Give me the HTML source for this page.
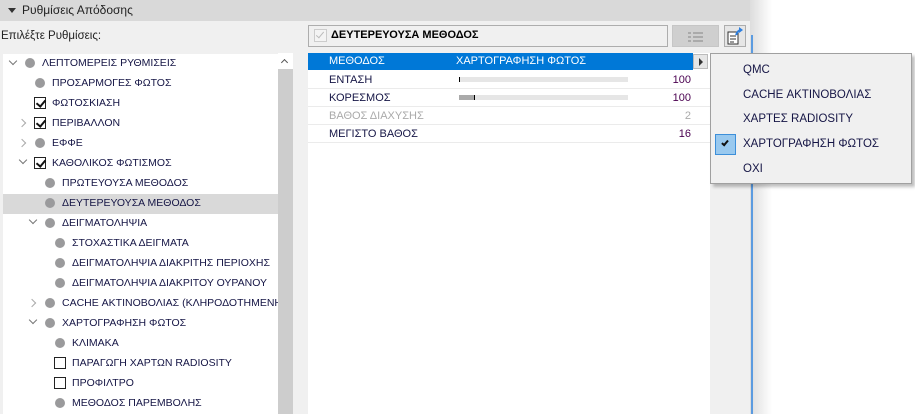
<!DOCTYPE html><html><head><meta charset="utf-8"><style>
*{margin:0;padding:0;box-sizing:border-box}
body{width:915px;height:414px;overflow:hidden;background:#fff;font-family:"Liberation Sans","DejaVu Sans",sans-serif;font-size:10.5px;color:#151545;position:relative}
.a{position:absolute}
.main{left:0;top:0;width:750px;height:414px;background:#f0f0f0}
.hdr{left:0;top:0;width:750px;height:21px;background:#d9d9d9;color:#222;font-size:12px}
.tree{left:3px;top:54px;width:275px;height:360px;background:#fff}
.sb{left:278px;top:53px;width:15px;height:361px;background:#cdcdcd}
.row{position:absolute;height:20px;line-height:20px;white-space:nowrap}
.dot{position:absolute;width:10px;height:10px;border-radius:50%;background:#9a9a9c}
.cb{position:absolute;width:12px;height:12px;border:1px solid #222;background:#fff}
.cb.k:after{content:"";position:absolute;left:3px;top:0px;width:4px;height:7px;border:solid #111;border-width:0 2px 2px 0;transform:rotate(40deg)}
.chd,.chr{position:absolute;width:6px;height:6px;border:solid #777;border-width:0 1.5px 1.5px 0}
.chd{transform:rotate(45deg)}
.chr{transform:rotate(-45deg);border-color:#aaa}
.rp{left:308px;top:53px;width:402px;height:361px;background:#fff}
.tr{position:absolute;left:308px;width:402px;height:18px;line-height:18px;border-bottom:1px solid #ebebeb;font-size:11px}
.pop{left:710px;top:53px;width:202px;height:131px;background:#f0f0f0;border:1px solid #a0a0a0;box-shadow:3px 3px 3px rgba(0,0,0,.25);font-size:11.5px}
.pi{position:absolute;left:32px}
</style></head><body>
<div class="a main"></div>
<div class="a" style="left:750px;top:0;width:22px;height:414px;background:linear-gradient(90deg,#ddd,#fff)"></div>
<div class="a" style="left:751px;top:35px;width:2px;height:379px;background:#5b9be0"></div>
<div class="a hdr"><span class="a" style="left:8px;top:8px;width:0;height:0;border-left:4px solid transparent;border-right:4px solid transparent;border-top:5px solid #333"></span><span class="a" style="left:22px;top:3px">Ρυθμίσεις Απόδοσης</span></div>
<div class="a" style="left:1px;top:30px;color:#222;font-size:11.5px">Επιλέξτε Ρυθμίσεις:</div>
<div class="a tree">
<div class="chd" style="left:7px;top:4px"></div><div class="dot" style="left:22px;top:4px"></div><div class="row" style="left:39px;top:-1px">ΛΕΠΤΟΜΕΡΕΙΣ ΡΥΘΜΙΣΕΙΣ</div>
<div class="dot" style="left:32px;top:24px"></div><div class="row" style="left:49px;top:19px">ΠΡΟΣΑΡΜΟΓΕΣ ΦΩΤΟΣ</div>
<div class="cb k" style="left:31px;top:43px"></div><div class="row" style="left:49px;top:39px">ΦΩΤΟΣΚΙΑΣΗ</div>
<div class="chr" style="left:16px;top:66px"></div><div class="cb k" style="left:31px;top:63px"></div><div class="row" style="left:49px;top:59px">ΠΕΡΙΒΑΛΛΟΝ</div>
<div class="chr" style="left:16px;top:86px"></div><div class="dot" style="left:32px;top:84px"></div><div class="row" style="left:49px;top:79px">ΕΦΦΕ</div>
<div class="chd" style="left:17px;top:103px"></div><div class="cb k" style="left:31px;top:103px"></div><div class="row" style="left:49px;top:99px">ΚΑΘΟΛΙΚΟΣ ΦΩΤΙΣΜΟΣ</div>
<div class="dot" style="left:42px;top:124px"></div><div class="row" style="left:59px;top:119px">ΠΡΩΤΕΥΟΥΣΑ ΜΕΘΟΔΟΣ</div>
<div class="a" style="left:0;top:140px;width:275px;height:20px;background:#d9d9d9"></div>
<div class="dot" style="left:42px;top:144px"></div><div class="row" style="left:59px;top:139px">ΔΕΥΤΕΡΕΥΟΥΣΑ ΜΕΘΟΔΟΣ</div>
<div class="chd" style="left:27px;top:163px"></div><div class="dot" style="left:42px;top:164px"></div><div class="row" style="left:59px;top:159px">ΔΕΙΓΜΑΤΟΛΗΨΙΑ</div>
<div class="dot" style="left:52px;top:184px"></div><div class="row" style="left:69px;top:179px">ΣΤΟΧΑΣΤΙΚΑ ΔΕΙΓΜΑΤΑ</div>
<div class="dot" style="left:52px;top:204px"></div><div class="row" style="left:69px;top:199px">ΔΕΙΓΜΑΤΟΛΗΨΙΑ ΔΙΑΚΡΙΤΗΣ ΠΕΡΙΟΧΗΣ</div>
<div class="dot" style="left:52px;top:224px"></div><div class="row" style="left:69px;top:219px">ΔΕΙΓΜΑΤΟΛΗΨΙΑ ΔΙΑΚΡΙΤΟΥ ΟΥΡΑΝΟΥ</div>
<div class="chr" style="left:26px;top:246px"></div><div class="dot" style="left:42px;top:244px"></div><div class="row" style="left:59px;top:239px;width:216px;overflow:hidden">CACHE ΑΚΤΙΝΟΒΟΛΙΑΣ (ΚΛΗΡΟΔΟΤΗΜΕΝΗ</div>
<div class="chd" style="left:27px;top:263px"></div><div class="dot" style="left:42px;top:264px"></div><div class="row" style="left:59px;top:259px">ΧΑΡΤΟΓΡΑΦΗΣΗ ΦΩΤΟΣ</div>
<div class="dot" style="left:52px;top:284px"></div><div class="row" style="left:69px;top:279px">ΚΛΙΜΑΚΑ</div>
<div class="cb" style="left:51px;top:303px"></div><div class="row" style="left:69px;top:299px">ΠΑΡΑΓΩΓΗ ΧΑΡΤΩΝ RADIOSITY</div>
<div class="cb" style="left:51px;top:323px"></div><div class="row" style="left:69px;top:319px">ΠΡΟΦΙΛΤΡΟ</div>
<div class="dot" style="left:52px;top:344px"></div><div class="row" style="left:69px;top:339px">ΜΕΘΟΔΟΣ ΠΑΡΕΜΒΟΛΗΣ</div>
</div>
<div class="a sb"><div class="a" style="left:0;top:0;width:15px;height:16px;background:#fff"></div><div class="a" style="left:4px;top:7px;width:5px;height:5px;border:solid #555;border-width:1.5px 0 0 1.5px;transform:rotate(45deg)"></div></div>
<div class="a" style="left:308px;top:25px;width:360px;height:22px;border:1px solid #adadad;background:#f0f0f0"></div>
<div class="a" style="left:314px;top:29px;width:13px;height:13px;border:1px solid #ccc;background:#f4f4f4"><div class="a" style="left:3px;top:0;width:4px;height:8px;border:solid #bbb;border-width:0 1.5px 1.5px 0;transform:rotate(40deg)"></div></div>
<div class="a" style="left:331px;top:29px;font-weight:bold;color:#000;font-size:11px">ΔΕΥΤΕΡΕΥΟΥΣΑ ΜΕΘΟΔΟΣ</div>
<div class="a" style="left:672px;top:25px;width:47px;height:22px;background:#cfcfcf;border:1px solid #c6c6c6"><svg width="47" height="22"><g fill="#aaa"><rect x="15" y="6" width="3" height="2"/><rect x="20" y="6" width="10" height="2"/><rect x="15" y="10" width="3" height="2"/><rect x="20" y="10" width="10" height="2"/><rect x="15" y="14" width="3" height="2"/><rect x="20" y="14" width="10" height="2"/></g></svg></div>
<div class="a" style="left:724px;top:25px;width:22px;height:22px;border:1px solid #adadad;background:#e6e6e6"><svg width="20" height="20"><rect x="3" y="6" width="10" height="12" fill="#fff" stroke="#333"/><path d="M5 10h6M5 13h6M5 16h4" stroke="#333"/><path d="M11 9 Q13 4 16 4" stroke="#2d7fe0" stroke-width="2" fill="none"/><path d="M14 1l4 3-4 3z" fill="#2d7fe0"/></svg></div>
<div class="a rp"></div>
<div class="a" style="left:308px;top:53px;width:385px;height:17px;background:#0078d7;color:#fff;line-height:17px;font-size:11px"><span class="a" style="left:21px">ΜΕΘΟΔΟΣ</span><span class="a" style="left:148px">ΧΑΡΤΟΓΡΑΦΗΣΗ ΦΩΤΟΣ</span></div>
<div class="a" style="left:693px;top:54px;width:15px;height:15px;background:#e6e6e6;border:1px solid #bbb"><div class="a" style="left:5px;top:3px;border-top:4px solid transparent;border-bottom:4px solid transparent;border-left:4px solid #333"></div></div>
<div class="tr" style="top:71px"><span class="a" style="left:21px">ΕΝΤΑΣΗ</span><span class="a" style="left:151px;top:6px;width:169px;height:5px;background:#e6e6e6"></span><span class="a" style="left:151px;top:6px;width:1px;height:5px;background:#000"></span><span class="a" style="right:19px;color:#4a0050">100</span></div>
<div class="tr" style="top:89px"><span class="a" style="left:21px">ΚΟΡΕΣΜΟΣ</span><span class="a" style="left:151px;top:6px;width:169px;height:5px;background:#e6e6e6"></span><span class="a" style="left:151px;top:6px;width:16px;height:5px;background:#aaa"></span><span class="a" style="left:166px;top:6px;width:1px;height:5px;background:#000"></span><span class="a" style="right:19px;color:#4a0050">100</span></div>
<div class="tr" style="top:107px;color:#aaa"><span class="a" style="left:21px">ΒΑΘΟΣ ΔΙΑΧΥΣΗΣ</span><span class="a" style="right:19px">2</span></div>
<div class="tr" style="top:125px"><span class="a" style="left:21px">ΜΕΓΙΣΤΟ ΒΑΘΟΣ</span><span class="a" style="right:19px;color:#4a0050">16</span></div>
<div class="a pop">
<div class="pi" style="top:10px">QMC</div>
<div class="pi" style="top:35px">CACHE ΑΚΤΙΝΟΒΟΛΙΑΣ</div>
<div class="pi" style="top:59px">ΧΑΡΤΕΣ RADIOSITY</div>
<div class="a" style="left:4px;top:80px;width:21px;height:21px;background:#99c9ef;border:1px solid #3d8fd9"><div class="a" style="left:7px;top:4px;width:4px;height:7px;border:solid #111;border-width:0 2px 2px 0;transform:rotate(40deg)"></div></div>
<div class="pi" style="top:84px">ΧΑΡΤΟΓΡΑΦΗΣΗ ΦΩΤΟΣ</div>
<div class="pi" style="top:109px">ΟΧΙ</div>
</div>
</body></html>
